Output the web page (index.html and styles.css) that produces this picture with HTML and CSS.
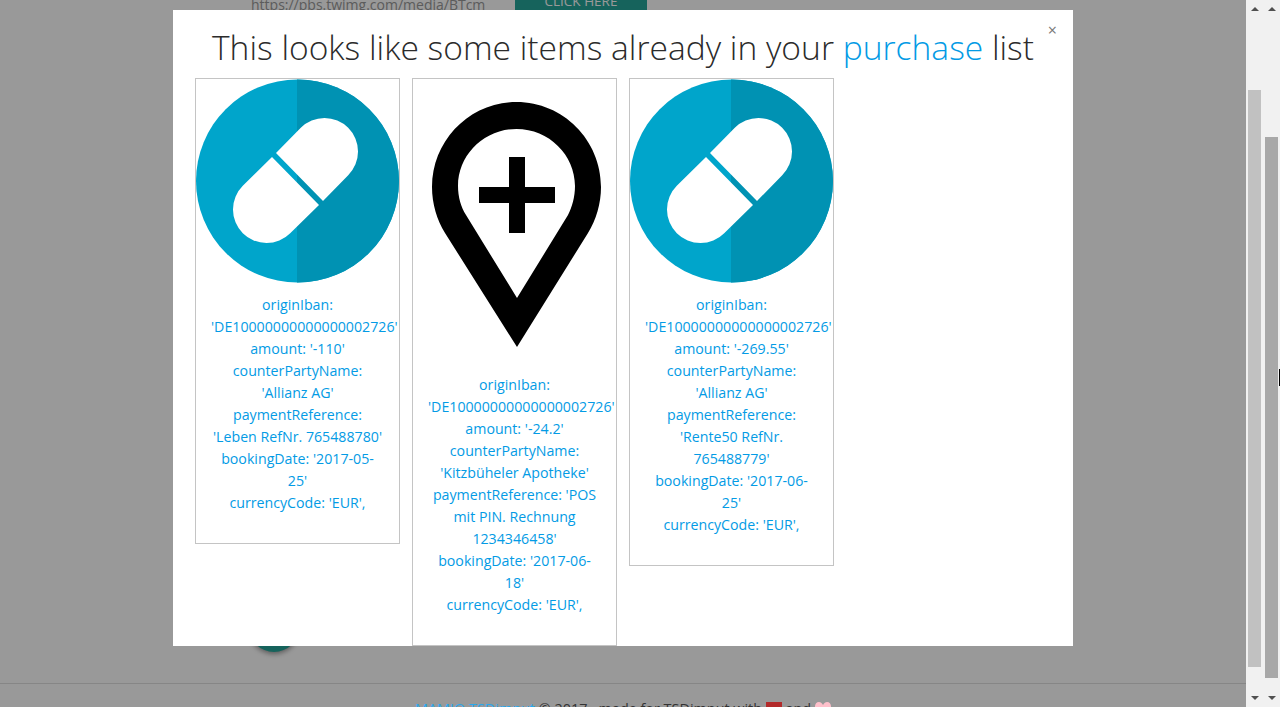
FILE: index.html
```html
<!DOCTYPE html>
<html lang="en">
<head>
    <meta charset="UTF-8">
    <meta name="viewport" content="width=device-width, initial-scale=1.0">
    <title>Purchases</title>
    <link rel="stylesheet" href="styles.css">
</head>
<body>
    <div class="page">
        <div class="page-content">
            <div class="top-row">
                <span class="url-text">https://pbs.twimg.com/media/BTcm</span>
                <span class="click-btn">CLICK HERE</span>
            </div>
            <div class="fab-row"><span class="fab"></span></div>
            <footer class="page-footer">
                <p><a href="#">MAMIQ TSDimput</a> © 2017 , made for TSDimput with
                    <svg class="love" viewBox="0 0 16 14"><path fill="#b22a2a" d="M0 0h16v14H0z"/></svg>
                    and
                    <svg class="love" viewBox="0 0 16 14"><path fill="#ffc0cb" d="M8 3C7 1 5.500 0 4 0 1.500 0 0 2 0 4.500 0 9 5 11 8 14c3-3 8-5 8-9.500C16 2 14.500 0 12 0c-1.500 0-3 1-4 3z"/></svg>
                </p>
            </footer>
        </div>
        <div class="backdrop"></div>

        <section class="modal">
            <span class="close">×</span>
            <h2 class="modal-title">This looks like some items already in your <span class="accent">purchase</span> list</h2>
            <div class="cards">
                <article class="card">
                    <svg class="card-icon" viewBox="0 0 203 204"><use href="#pill"/></svg>
                    <p>originIban:<br>'DE10000000000000002726'<br>amount: '-110'<br>counterPartyName:<br>'Allianz AG'<br>paymentReference:<br>'Leben RefNr. 765488780'<br>bookingDate: '2017-05-<br>25'<br>currencyCode: 'EUR',</p>
                </article>
                <article class="card">
                    <svg class="card-icon pin" viewBox="0 0 203 284">
                        <path fill-rule="evenodd" d="M103.500 23C150 23 188 61 188 108c0 17-5 33-13 46l-71 114-72-114c-8-13-13-29-13-46C19 61 57 23 103.500 23zm0 27C71 50 45 76 45 107c0 11 3 21 8 29l51 83 51-83c4-8 7-18 7-29 0-31-26-57-58.500-57z"/>
                        <path d="M96 78h16v30h30v16h-30v30H96v-30H66v-16h30z"/>
                    </svg>
                    <p>originIban:<br>'DE10000000000000002726'<br>amount: '-24.2'<br>counterPartyName:<br>'Kitzbüheler Apotheke'<br>paymentReference: 'POS<br>mit PIN. Rechnung<br>1234346458'<br>bookingDate: '2017-06-<br>18'<br>currencyCode: 'EUR',</p>
                </article>
                <article class="card">
                    <svg class="card-icon" viewBox="0 0 203 204"><use href="#pill"/></svg>
                    <p>originIban:<br>'DE10000000000000002726'<br>amount: '-269.55'<br>counterPartyName:<br>'Allianz AG'<br>paymentReference:<br>'Rente50 RefNr.<br>765488779'<br>bookingDate: '2017-06-<br>25'<br>currencyCode: 'EUR',</p>
                </article>
            </div>
        </section>

        <div class="scrollbars">
            <div class="scrollbar">
                <span class="arrow up"></span>
                <div class="track thumb-a"><span class="thumb"></span></div>
                <span class="arrow down"></span>
            </div>
            <div class="scrollbar">
                <span class="arrow up"></span>
                <div class="track thumb-b"><span class="thumb"></span></div>
                <span class="arrow down"></span>
            </div>
        </div>
        <span class="cursor"></span>
    </div>

    <svg class="defs" width="0" height="0">
        <defs>
            <g id="pill">
                <circle cx="101.500" cy="102" r="101.500" fill="#00a5cb"/>
                <path d="M101 .5h.5a101.500 101.500 0 0 1 0 203H101z" fill="#0092b3"/>
                <path d="M80 74l24.800-25.200a33.500 33.500 0 0 1 47.400 47.400L127 122z" fill="#fff"/>
                <path d="M76 78L46.800 106.800a33.500 33.500 0 0 0 47.400 47.400L123 126z" fill="#fff"/>
            </g>
        </defs>
    </svg>
</body>
</html>
```

FILE: styles.css
```css
* {
    box-sizing: border-box;
}

html, body {
    height: 100%;
}

body {
    margin: 0;
    font-family: "Open Sans", "Noto Sans", sans-serif;
    overflow: hidden;
    background-color: #fff;
}

.page {
    position: relative;
    height: 707px;
    overflow: hidden;
}

.page-content {
    width: 1246px;
    height: 707px;
    display: flex;
    flex-direction: column;
    color: #333;
}

.top-row {
    display: flex;
    flex: none;
    height: 10px;
    padding-left: 251px;
    overflow: hidden;
}

.url-text {
    width: 264px;
    font-size: 14px;
    line-height: 14px;
    margin-top: -2px;
    color: #999;
    white-space: nowrap;
}

.click-btn {
    width: 132px;
    height: 18px;
    margin-top: -8px;
    background-color: #26a69a;
    color: #fff;
    font-size: 13.500px;
    line-height: 18px;
    text-align: center;
}

.fab-row {
    flex: none;
    height: 673px;
    padding: 612px 0 0 249px;
}

.fab {
    display: block;
    width: 50px;
    height: 30px;
    border-radius: 0 0 25px 25px;
    background-color: #26a69a;
    box-shadow: 0 2px 5px rgba(0, 0, 0, 0.4);
}

.page-footer {
    flex: none;
    border-top: 1px solid #e0e0e0;
    text-align: center;
    font-size: 14.400px;
}

.page-footer p {
    position: relative;
    z-index: 2;
    margin: 15px 0 0;
    line-height: 20px;
    white-space: nowrap;
}

.page-footer a {
    color: #29a8ee;
    text-decoration: none;
}

.love {
    width: 16px;
    height: 14px;
    vertical-align: -2px;
}

.backdrop {
    position: absolute;
    top: 0;
    left: 0;
    width: 1246px;
    height: 707px;
    background-color: rgba(0, 0, 0, 0.4);
}

.modal {
    position: absolute;
    z-index: 3;
    top: 10px;
    left: 173px;
    width: 900px;
    height: 636px;
    background-color: #fff;
    overflow: hidden;
    padding: 0 22px;
}

.close {
    position: absolute;
    top: 10px;
    right: 16px;
    color: #777;
    font-size: 16px;
    line-height: 20px;
}

.modal-title {
    margin: 14px 0 0;
    height: 54px;
    font-size: 33.600px;
    line-height: 46px;
    font-weight: 300;
    color: #2b2b2b;
    text-align: center;
    white-space: nowrap;
}

.accent {
    color: #039be5;
}

.cards {
    display: flex;
    align-items: flex-start;
    gap: 12px;
}

.card {
    width: 205px;
    border: 1px solid #c4c4c4;
    text-align: center;
    color: #039be5;
    font-size: 14.200px;
    line-height: 22px;
    padding-bottom: 29px;
}

.card p {
    margin: 11px 0 0;
    padding: 0 15px;
    white-space: nowrap;
}

.card-icon {
    display: block;
    width: 203px;
    height: 204px;
}

.card-icon.pin {
    height: 284px;
}

.defs {
    position: absolute;
}

.scrollbars {
    position: absolute;
    z-index: 3;
    top: 0;
    right: 0;
    height: 707px;
    display: flex;
}

.scrollbar {
    width: 17px;
    display: flex;
    flex-direction: column;
    background-color: #f1f1f1;
}

.track {
    flex: 1;
    display: flex;
    flex-direction: column;
}

.thumb {
    display: block;
    margin: 0 2px;
    background-color: #c1c1c1;
}

.thumb-a { padding-top: 73px; }
.thumb-b { padding-top: 120px; }
.thumb-a .thumb { height: 577px; }
.thumb-b .thumb { height: 541px; background-color: #a8a8a8; }

.arrow {
    height: 17px;
    position: relative;
    flex: none;
}

.arrow::after {
    content: "";
    position: absolute;
    left: 5px;
    border-left: 4px solid transparent;
    border-right: 4px solid transparent;
}

.arrow.up::after {
    top: 7px;
    border-bottom: 4px solid #505050;
}

.arrow.down::after {
    top: 6px;
    border-top: 4px solid #505050;
}

.cursor {
    position: absolute;
    z-index: 4;
    top: 369px;
    left: 1279px;
    width: 1px;
    height: 17px;
    background-color: #000;
}
```
